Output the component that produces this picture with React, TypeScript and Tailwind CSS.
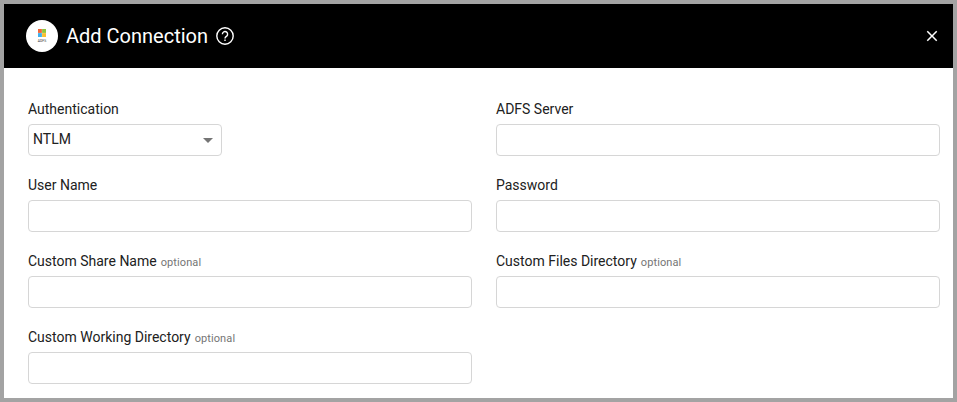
import type { ReactNode } from "react";
import { MdClose } from "react-icons/md";

function AdfsLogo() {
  return (
    <div className="flex size-8 shrink-0 items-center justify-center rounded-full bg-white">
      <svg width="32" height="32" viewBox="0 0 32 32" aria-label="ADFS">
        <rect x="12" y="9" width="3.9" height="3.9" fill="#f1683a" />
        <rect x="16.1" y="9" width="3.9" height="3.9" fill="#8fc63f" />
        <rect x="12" y="13.1" width="3.9" height="3.9" fill="#3fb0ee" />
        <rect x="16.1" y="13.1" width="3.9" height="3.9" fill="#fcc02f" />
        <text x="16" y="22" textAnchor="middle" fontSize="3.4" fill="#333" fontFamily="Roboto, sans-serif">
          ADFS
        </text>
      </svg>
    </div>
  );
}

function HelpIcon() {
  return (
    <svg width="18" height="18" viewBox="0 0 18 18" fill="none" stroke="currentColor" strokeWidth="1.4" className="ml-2">
      <circle cx="9" cy="9" r="8.2" />
      <path d="M6.4 7.2a2.6 2.6 0 1 1 4.3 1.9C9.8 9.8 9 10.2 9 11.4" />
      <path d="M9 12.6v1.5" />
    </svg>
  );
}

type FieldProps = { label: string; optional?: boolean; children?: ReactNode };

function Field({ label, optional, children }: FieldProps) {
  return (
    <label className="flex flex-col">
      <span className="mb-1 block h-5 text-sm leading-[19px] whitespace-nowrap">
        {label}
        {optional && <span className="ml-1 text-[11px] tracking-[0.1px] text-[#757575]">optional</span>}
      </span>
      {children ?? (
        <input type="text" className="h-8 w-full rounded border border-[#d6d6d6] bg-white px-1 text-sm outline-none" />
      )}
    </label>
  );
}

export default function App() {
  return (
    <div className="h-[402px] w-[957px] overflow-hidden border-4 border-[#a3a3a3] bg-white font-['Roboto',sans-serif] text-[#212121]">
      <header className="flex h-16 items-center bg-black pr-3 pl-[22px] text-white">
        <AdfsLogo />
        <h1 className="ml-2 text-xl leading-6">Add Connection</h1>
        <HelpIcon />
        <button type="button" aria-label="Close" className="ml-auto">
          <MdClose className="size-[18px]" />
        </button>
      </header>
      <form className="grid grid-cols-[444px_444px] gap-x-6 gap-y-5 pt-8 pl-6">
        <Field label="Authentication">
          <div className="flex h-8 w-[194px] items-center justify-between rounded border border-[#d6d6d6] pr-2 pl-1 text-sm">
            <span className="pb-0.5">NTLM</span>
            <svg width="10" height="5" viewBox="0 0 10 5" className="mt-px">
              <path d="M0 0h10L5 5z" fill="#757575" />
            </svg>
          </div>
        </Field>
        <Field label="ADFS Server" />
        <Field label="User Name" />
        <Field label="Password" />
        <Field label="Custom Share Name" optional />
        <Field label="Custom Files Directory" optional />
        <Field label="Custom Working Directory" optional />
      </form>
    </div>
  );
}
